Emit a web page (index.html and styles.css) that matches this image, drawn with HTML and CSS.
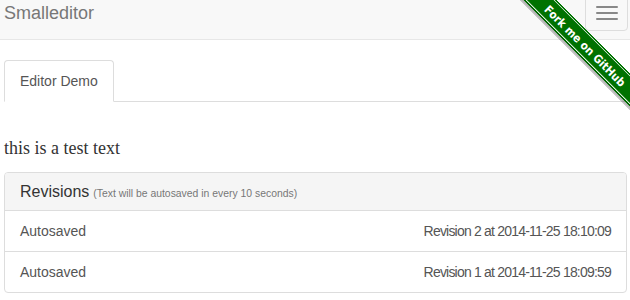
FILE: index.html
```html
<!DOCTYPE html>
<html>
<head>
<meta charset="utf-8">
<link rel="stylesheet" href="styles.css">
</head>
<body>
<nav class="navbar">
  <span class="brand">Smalleditor</span>
  <button class="toggle" type="button"><span class="bar"></span><span class="bar"></span><span class="bar"></span></button>
</nav>
<a class="ribbon" href="#"><span class="ribbon-text">Fork me on GitHub</span></a>
<main class="content">
  <ul class="tabs">
    <li class="tab active">Editor Demo</li>
  </ul>
  <p class="editor">this is a test text</p>
  <section class="panel">
    <div class="panel-heading"><span class="panel-title">Revisions</span> <small class="hint">(Text will be autosaved in every 10 seconds)</small></div>
    <ul class="list">
      <li class="item"><span>Autosaved</span><span class="rev">Revision 2 at 2014-11-25 18:10:09</span></li>
      <li class="item"><span>Autosaved</span><span class="rev">Revision 1 at 2014-11-25 18:09:59</span></li>
    </ul>
  </section>
</main>
</body>
</html>
```
FILE: styles.css
```css
* { box-sizing: border-box; }
html, body { margin: 0; padding: 0; }
body {
  font-family: "Liberation Sans", Arial, sans-serif;
  font-size: 14px;
  line-height: 20px;
  color: #333;
  background: #fff;
  width: 630px;
  height: 300px;
  overflow: hidden;
  position: relative;
}
.navbar {
  display: flex;
  justify-content: space-between;
  align-items: flex-start;
  height: 40px;
  background: #f8f8f8;
  border-bottom: 1px solid #e7e7e7;
  padding: 0 2px 0 4px;
}
.brand {
  font-size: 18px;
  line-height: 20px;
  color: #777;
  padding-top: 3px;
}
.toggle {
  margin-top: -4px;
  width: 43px;
  height: 35px;
  padding: 9px 10px;
  background: transparent;
  border: 1px solid #ddd;
  border-radius: 4px;
  display: flex;
  flex-direction: column;
  gap: 4px;
  align-items: center;
}
.bar {
  display: block;
  width: 22px;
  height: 2px;
  background: #888;
  border-radius: 1px;
}
.ribbon {
  position: absolute;
  top: 0;
  right: 0;
  width: 110px;
  height: 112px;
  text-decoration: none;
  background: linear-gradient(45deg,
    transparent 0, transparent 79px,
    rgba(0,0,0,0.18) 79px, rgba(0,0,0,0.35) 82px,
    #006a00 82px, #007200 83px,
    rgba(255,255,255,0.45) 83.5px, #007200 84.5px,
    #007200 102.5px, rgba(255,255,255,0.45) 103px, #007200 104px,
    #007200 105px, transparent 105px);
}
.ribbon-text {
  position: absolute;
  left: 9px;
  top: 39px;
  width: 112px;
  height: 14px;
  color: #fff;
  font-family: "DejaVu Sans Condensed", "DejaVu Sans", sans-serif;
  font-weight: bold;
  font-size: 11.5px;
  line-height: 14px;
  text-align: center;
  white-space: nowrap;
  transform: rotate(45deg);
}
.content {
  padding: 20px 3px 0 4px;
}
.tabs {
  list-style: none;
  margin: 0;
  padding: 0;
  display: flex;
  border-bottom: 1px solid #ddd;
  margin-right: -3px;
}
.tab {
  padding: 10px 15px;
  margin-bottom: -1px;
  border: 1px solid transparent;
  border-radius: 4px 4px 0 0;
  color: #555;
  line-height: 20px;
}
.tab.active {
  background: #fff;
  border-color: #ddd #ddd transparent;
}
.editor {
  margin: 34px 0 0;
  font-family: "Liberation Serif", "Times New Roman", serif;
  font-size: 18px;
  line-height: 24px;
  color: #333;
  height: 36px;
}
.panel {
  border: 1px solid #ddd;
  border-radius: 4px;
  background: #fff;
}
.panel-heading {
  background: #f5f5f5;
  border-bottom: 1px solid #ddd;
  border-radius: 3px 3px 0 0;
  padding: 10px 15px;
  line-height: 17.6px;
  height: 38px;
}
.panel-title {
  font-size: 16px;
  color: #333;
}
.hint {
  font-size: 10.4px;
  color: #777;
}
.list {
  list-style: none;
  margin: 0;
  padding: 0;
}
.item {
  display: flex;
  justify-content: space-between;
  padding: 10px 15px;
  line-height: 20px;
  color: #555;
  border-top: 1px solid #ddd;
}
.item:first-child { border-top: 0; }
.rev { letter-spacing: -0.8px; }
```
